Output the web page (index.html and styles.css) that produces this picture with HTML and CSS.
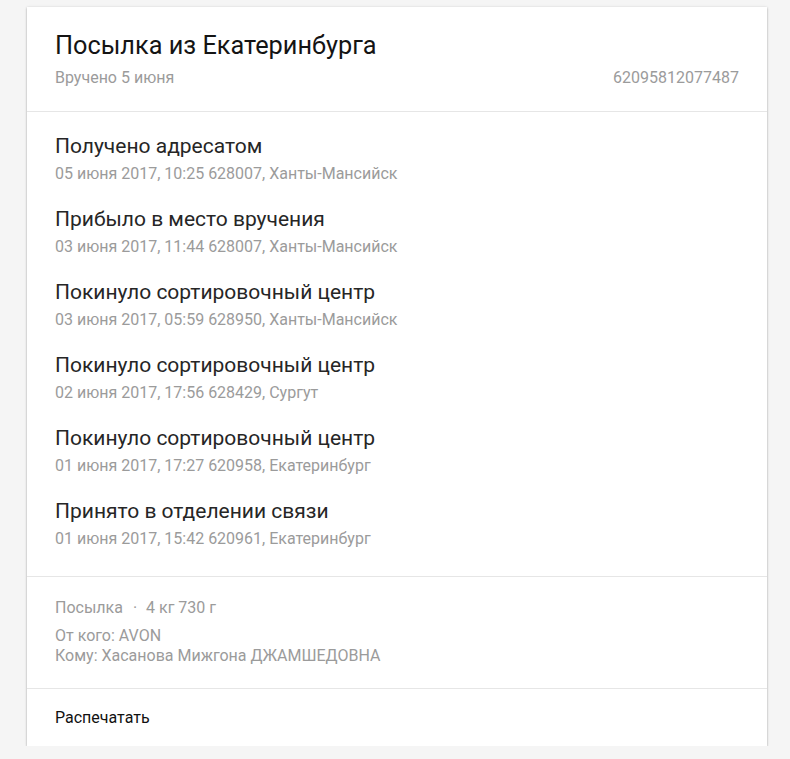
FILE: index.html
```html
<!DOCTYPE html>
<html lang="ru">
<head>
<meta charset="UTF-8">
<title>Посылка из Екатеринбурга</title>
<link rel="stylesheet" href="styles.css">
</head>
<body>
<div class="card">
  <div class="card-head">
    <h1>Посылка из Екатеринбурга</h1>
    <div class="head-meta">
      <span>Вручено 5 июня</span>
      <span>62095812077487</span>
    </div>
  </div>

  <ul class="events">
    <li>
      <div class="ev-title">Получено адресатом</div>
      <div class="ev-sub">05 июня 2017, 10:25 628007, Ханты-Мансийск</div>
    </li>
    <li>
      <div class="ev-title">Прибыло в место вручения</div>
      <div class="ev-sub">03 июня 2017, 11:44 628007, Ханты-Мансийск</div>
    </li>
    <li>
      <div class="ev-title">Покинуло сортировочный центр</div>
      <div class="ev-sub">03 июня 2017, 05:59 628950, Ханты-Мансийск</div>
    </li>
    <li>
      <div class="ev-title">Покинуло сортировочный центр</div>
      <div class="ev-sub">02 июня 2017, 17:56 628429, Сургут</div>
    </li>
    <li>
      <div class="ev-title">Покинуло сортировочный центр</div>
      <div class="ev-sub">01 июня 2017, 17:27 620958, Екатеринбург</div>
    </li>
    <li>
      <div class="ev-title">Принято в отделении связи</div>
      <div class="ev-sub">01 июня 2017, 15:42 620961, Екатеринбург</div>
    </li>
  </ul>

  <div class="info">
    <div class="info-kind">Посылка <span class="dot">·</span> 4 кг 730 г</div>
    <div>От кого: AVON</div>
    <div>Кому: Хасанова Мижгона ДЖАМШЕДОВНА</div>
  </div>

  <div class="actions">
    <a href="#">Распечатать</a>
  </div>
</div>
</body>
</html>
```

FILE: styles.css
```css
body {
margin: 0;
background: #f5f5f5;
font-family: Roboto, "Noto Sans", sans-serif;
}

.card {
width: 740px;
margin: 7px 0 0 27px;
background: #fff;
box-shadow: 0 1px 2px rgba(0,0,0,0.3), 0 0 3px rgba(0,0,0,0.08);
}

.card-head {
padding: 23px 28px 23px 28px;
border-bottom: 1px solid #e6e6e6;
}

.card-head h1 {
margin: 0;
font-size: 25.3px;
font-weight: 400;
line-height: 32px;
color: #141414;
}

.head-meta {
display: flex;
justify-content: space-between;
font-size: 16px;
line-height: 20px;
color: #9b9b9b;
margin-top: 6px;
}

.events {
list-style: none;
margin: 0;
padding: 20px 28px 6px 28px;
border-bottom: 1px solid #e6e6e6;
}

.events li {
height: 52px;
margin-bottom: 21px;
}

.ev-title {
font-size: 21px;
line-height: 28px;
color: #262626;
}

.ev-sub {
font-size: 16px;
line-height: 20px;
color: #9b9b9b;
margin-top: 4px;
}

.info {
padding: 21px 28px 22px 28px;
font-size: 16px;
line-height: 20px;
color: #9b9b9b;
border-bottom: 1px solid #e6e6e6;
}

.info-kind {
margin-bottom: 8px;
}

.info .dot {
margin: 0 5px 0 6px;
}

.actions {
padding: 19px 28px 18px 28px;
font-size: 16px;
line-height: 20px;
}

.actions a {
color: #111;
text-decoration: none;
}
```
